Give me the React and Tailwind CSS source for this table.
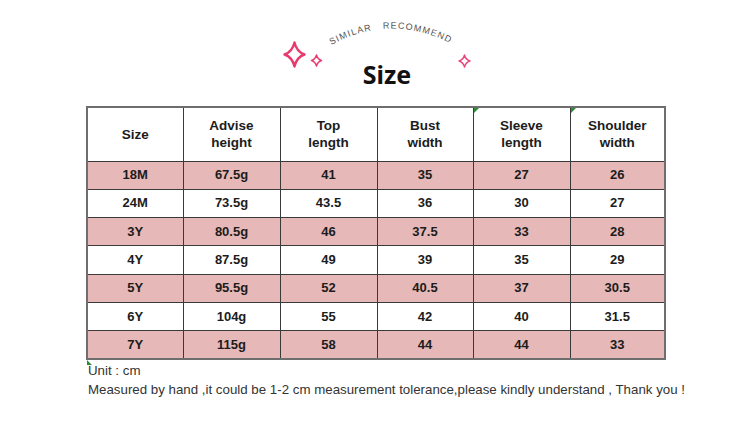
const headers = [
  ["Size"],
  ["Advise", "height"],
  ["Top", "length"],
  ["Bust", "width"],
  ["Sleeve", "length"],
  ["Shoulder", "width"],
];

const rows = [
  ["18M", "67.5g", "41", "35", "27", "26"],
  ["24M", "73.5g", "43.5", "36", "30", "27"],
  ["3Y", "80.5g", "46", "37.5", "33", "28"],
  ["4Y", "87.5g", "49", "39", "35", "29"],
  ["5Y", "95.5g", "52", "40.5", "37", "30.5"],
  ["6Y", "104g", "55", "42", "40", "31.5"],
  ["7Y", "115g", "58", "44", "44", "33"],
];

const widths = ["w-[96px]", "w-[97px]", "w-[97px]", "w-[96px]", "w-[97px]", "w-[95px]"];

function sparkle(cx, cy, rx, ry) {
  const k = 0.22;
  return `M${cx},${cy - ry} Q${cx + rx * k},${cy - ry * k} ${cx + rx},${cy} Q${cx + rx * k},${cy + ry * k} ${cx},${cy + ry} Q${cx - rx * k},${cy + ry * k} ${cx - rx},${cy} Q${cx - rx * k},${cy - ry * k} ${cx},${cy - ry} Z`;
}

function Corner() {
  return (
    <span className="absolute left-0 top-0 w-0 h-0 border-t-[5px] border-t-[#2e8b3a] border-r-[5px] border-r-transparent" />
  );
}

export default function App() {
  return (
    <div
      className="w-[750px] h-[446px] bg-white overflow-hidden"
      style={{ fontFamily: '"Liberation Sans", Arial, sans-serif' }}
    >
      <div className="relative h-[106px]">
        <svg className="absolute inset-0" width="750" height="106" viewBox="0 0 750 106">
          <path id="arc" d="M326,48 Q389,10 456,46" fill="none" />
          <text fontSize="9" fill="#555" letterSpacing="1.1" fontFamily="Liberation Sans, Arial, sans-serif">
            <textPath href="#arc" startOffset="50%" textAnchor="middle">
              SIMILAR{"\u00a0\u00a0\u00a0"}RECOMMEND
            </textPath>
          </text>
          <path d={sparkle(294.5, 54.5, 10, 12)} fill="none" stroke="#e83a6e" strokeWidth="2.4" strokeLinejoin="round" />
          <path d={sparkle(316.5, 60.5, 5, 5.5)} fill="none" stroke="#e83a6e" strokeWidth="1.5" strokeLinejoin="round" />
          <path d={sparkle(464.5, 61, 5.5, 6)} fill="none" stroke="#e8467a" strokeWidth="1.4" strokeLinejoin="round" />
        </svg>
        <h1
          className="absolute left-[24px] right-0 top-[59px] text-center text-[25px] font-bold leading-[30px] text-[#111]"
          style={{ fontFamily: '"Noto Sans", "Open Sans", sans-serif' }}
        >
          Size
        </h1>
      </div>

      <div className="ml-[86px] relative w-[578px]">
        <table className="table-fixed border-collapse w-[578px] border-2 border-[#6e6e6e] text-[#1c1c1c]">
          <thead>
            <tr className="h-[54px] bg-white">
              {headers.map((h, i) => (
                <th
                  key={i}
                  className={`${widths[i]} relative border border-[#3a3a3a] text-[13.5px] font-bold leading-[17px] p-0 align-middle`}
                >
                  {(i === 4 || i === 5) && <Corner />}
                  {h.map((line) => (
                    <div key={line}>{line}</div>
                  ))}
                </th>
              ))}
            </tr>
          </thead>
          <tbody>
            {rows.map((r, ri) => (
              <tr key={r[0]} className={`h-[28.3px] ${ri % 2 === 0 ? "bg-[#e6b8b8]" : "bg-white"}`}>
                {r.map((c, ci) => (
                  <td key={ci} className="border border-[#3a3a3a] text-[13px] font-bold text-center p-0 leading-[16px]">
                    {c}
                  </td>
                ))}
              </tr>
            ))}
          </tbody>
        </table>
        <span className="absolute left-[1px] -bottom-[5px] w-0 h-0 border-b-[5px] border-b-[#2e8b3a] border-r-[5px] border-r-transparent" />
      </div>

      <div className="ml-[88px] mt-[1px] text-[13.3px] leading-[19px] text-[#333]">
        <div>Unit : cm</div>
        <div>Measured by hand ,it could be 1-2 cm measurement tolerance,please kindly understand , Thank you !</div>
      </div>
    </div>
  );
}
